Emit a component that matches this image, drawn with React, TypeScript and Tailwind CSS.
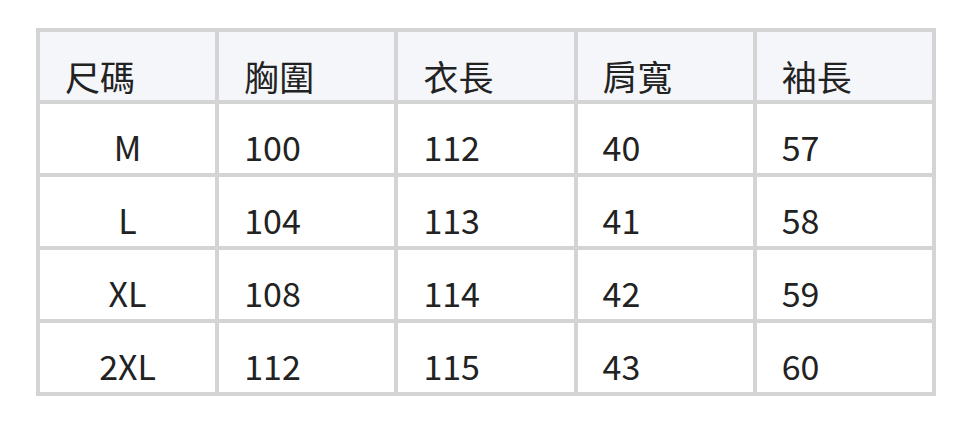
import React from 'react';

const headers = ['尺碼', '胸圍', '衣長', '肩寬', '袖長'];

const rows = [
  ['M', '100', '112', '40', '57'],
  ['L', '104', '113', '41', '58'],
  ['XL', '108', '114', '42', '59'],
  ['2XL', '112', '115', '43', '60'],
];

const App: React.FC = () => {
  return (
    <div
      className="w-[972px] h-[422px] bg-white pt-[28px] pl-[36px]"
      style={{ fontFamily: '"Noto Sans CJK TC", "Noto Sans", sans-serif' }}
    >
      <table className="w-[900px] border-collapse border-[4px] border-[#d4d4d4] table-fixed text-[#222] text-[34px]">
        <thead>
          <tr className="bg-[#f5f6fa]">
            {headers.map((h) => (
              <th
                key={h}
                className="border-[4px] border-[#d4d4d4] h-[72px] align-bottom text-left font-normal text-[35px] pl-[25px] pb-0 leading-[48px]"
              >
                {h}
              </th>
            ))}
          </tr>
        </thead>
        <tbody>
          {rows.map((row) => (
            <tr key={row[0]}>
              {row.map((cell, i) => (
                <td
                  key={i}
                  className={
                    'border-[4px] border-[#d4d4d4] h-[73px] align-bottom pb-[2px] leading-[48px] ' +
                    (i === 0 ? 'text-center' : 'text-left pl-[25px]')
                  }
                >
                  {cell}
                </td>
              ))}
            </tr>
          ))}
        </tbody>
      </table>
    </div>
  );
};

export default App;
